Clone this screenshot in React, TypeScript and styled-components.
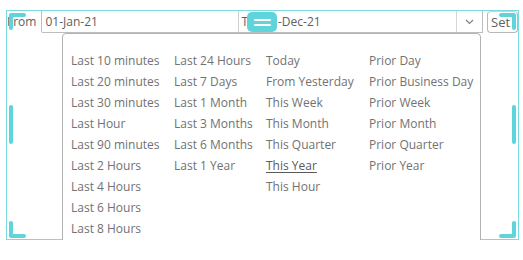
import styled, { createGlobalStyle } from 'styled-components';

const GlobalStyle = createGlobalStyle`
    body {
        margin: 0;
        background: #ffffff;
        font-family: "Open Sans", "Noto Sans", sans-serif;
    }
`

const cyan = '#5fd5db'

const Frame = styled.div`
    position: relative;
    box-sizing: border-box;
    width: 513px;
    height: 230px;
    margin: 10px 0 0 6px;
    border: 1px solid #7adce0;
`

const Toolbar = styled.div`
    display: flex;
    align-items: stretch;
    height: 22px;
    font-size: 12px;
    color: #606060;
`

const Label = styled.span`
    line-height: 21px;
    padding-right: 5px;
`

const DateBox = styled.div`
    display: flex;
    flex: 1;
    box-sizing: border-box;
    border: 1px solid #bdbdbd;
    border-top: none;
    border-bottom-left-radius: 2px;
`

const Field = styled.div<{ $width?: number }>`
    box-sizing: border-box;
    ${p => p.$width ? `width: ${p.$width}px; flex-shrink: 0;` : 'flex: 1;'}
    padding-left: 3px;
    line-height: 21px;
    white-space: nowrap;
`

const FirstField = styled(Field)`
    border-right: 1px solid #d0d0d0;
`

const ToLabel = styled.span`
    line-height: 21px;
    padding: 0 6px 0 2px;
`

const Chevron = styled.div`
    width: 25px;
    display: flex;
    align-items: center;
    justify-content: center;
    border-left: 1px solid #d6d6d6;
`

const SetButton = styled.button`
    box-sizing: border-box;
    width: 31px;
    margin-left: 4px;
    padding: 0 0 0 3px;
    text-align: left;
    border: 1px solid #b8b8b8;
    border-top-color: #d0d0d0;
    border-radius: 4px;
    background: #fff;
    font: inherit;
    font-size: 13px;
    color: #606060;
`

const Menu = styled.div`
    position: absolute;
    left: 55px;
    top: 22px;
    box-sizing: border-box;
    width: 419px;
    height: 224px;
    padding: 16px 8px 0 8px;
    display: flex;
    background: #fff;
    border: 1px solid #b2b2b2;
    border-radius: 4px;
    z-index: 2;
`

const Column = styled.ul<{ $width?: number }>`
    list-style: none;
    margin: 0;
    padding: 0;
    ${p => p.$width ? `width: ${p.$width}px; flex-shrink: 0;` : 'flex: 1;'}
`

const Item = styled.li<{ $active?: boolean }>`
    height: 21px;
    line-height: 21px;
    font-size: 12px;
    white-space: nowrap;
    color: ${p => p.$active ? '#5a5a5a' : '#727272'};
    text-decoration: ${p => p.$active ? 'underline' : 'none'};
    text-underline-offset: 2px;
`

const Corner = styled.svg<{ $pos: string }>`
    position: absolute;
    width: 17px;
    height: 17px;
    z-index: 3;
    ${p => p.$pos}
`

const SideBar = styled.div<{ $side: 'left' | 'right' }>`
    position: absolute;
    top: 94px;
    ${p => p.$side}: 2px;
    width: 4px;
    height: 39px;
    border-radius: 2px;
    background: ${cyan};
    z-index: 3;
`

const DragHandle = styled.div`
    position: absolute;
    left: 240px;
    top: 1px;
    width: 30px;
    height: 20px;
    border-radius: 5px;
    background: ${cyan};
    display: flex;
    flex-direction: column;
    align-items: center;
    justify-content: center;
    gap: 3px;
    z-index: 3;
`

const Grip = styled.span`
    width: 17px;
    height: 2px;
    border-radius: 1px;
    background: #fff;
`

const columns = [
    { width: 103, items: ['Last 10 minutes', 'Last 20 minutes', 'Last 30 minutes', 'Last Hour', 'Last 90 minutes', 'Last 2 Hours', 'Last 4 Hours', 'Last 6 Hours', 'Last 8 Hours'] },
    { width: 92, items: ['Last 24 Hours', 'Last 7 Days', 'Last 1 Month', 'Last 3 Months', 'Last 6 Months', 'Last 1 Year'] },
    { width: 103, items: ['Today', 'From Yesterday', 'This Week', 'This Month', 'This Quarter', 'This Year', 'This Hour'] },
    { width: 0, items: ['Prior Day', 'Prior Business Day', 'Prior Week', 'Prior Month', 'Prior Quarter', 'Prior Year'] },
]

const corners = [
    { pos: 'left: 2px; top: 2px;', d: 'M2 15 V2 H15' },
    { pos: 'right: 2px; top: 2px;', d: 'M2 2 H15 V15' },
    { pos: 'left: 2px; bottom: 1px;', d: 'M2 2 V15 H15' },
    { pos: 'right: 2px; bottom: 1px;', d: 'M2 15 H15 V2' },
]

export default function App() {
    return (
        <>
            <GlobalStyle />
            <Frame>
                <Toolbar>
                    <Label>From</Label>
                    <DateBox>
                        <FirstField $width={197}>01-Jan-21</FirstField>
                        <ToLabel>To</ToLabel>
                        <Field>31-Dec-21</Field>
                        <Chevron>
                            <svg width="9" height="6" viewBox="0 0 9 6">
                                <polyline points="1,1 4.5,4.5 8,1" fill="none" stroke="#808080" strokeWidth="1.2" />
                            </svg>
                        </Chevron>
                    </DateBox>
                    <SetButton>Set</SetButton>
                </Toolbar>
                <Menu>
                    {columns.map((col, i) => (
                        <Column key={i} $width={col.width || undefined}>
                            {col.items.map(item => (
                                <Item key={item} $active={item === 'This Year'}>{item}</Item>
                            ))}
                        </Column>
                    ))}
                </Menu>
                {corners.map((c, i) => (
                    <Corner key={i} $pos={c.pos} viewBox="0 0 17 17">
                        <path d={c.d} fill="none" stroke={cyan} strokeWidth="4" strokeLinecap="round" strokeLinejoin="round" />
                    </Corner>
                ))}
                <SideBar $side="left" />
                <SideBar $side="right" />
                <DragHandle>
                    <Grip />
                    <Grip />
                </DragHandle>
            </Frame>
        </>
    );
}
